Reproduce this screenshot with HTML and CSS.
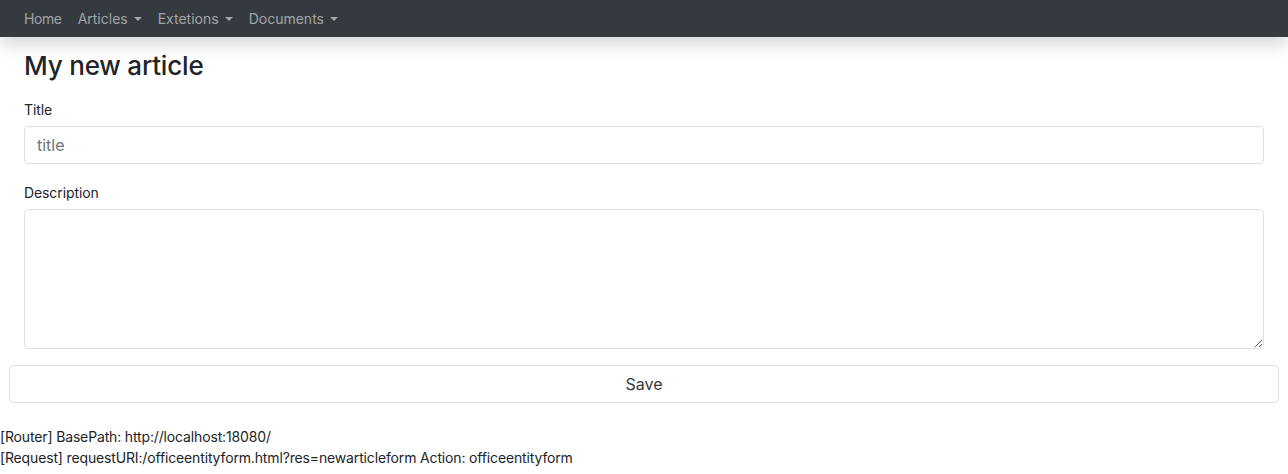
FILE: index.html
```html
<!DOCTYPE html>
<html lang="en">
<head>
<meta charset="utf-8">
<title>My new article</title>
<link rel="stylesheet" href="styles.css">
</head>
<body>
<nav class="navbar">
  <a class="nav-link" href="#">Home</a>
  <a class="nav-link dropdown" href="#">Articles</a>
  <a class="nav-link dropdown" href="#">Extetions</a>
  <a class="nav-link dropdown" href="#">Documents</a>
</nav>
<main class="content">
  <h3 class="page-title">My new article</h3>
  <div class="field">
    <label class="field-label" for="title">Title</label>
    <input class="field-input" id="title" type="text" placeholder="title">
  </div>
  <div class="field">
    <label class="field-label" for="desc">Description</label>
    <textarea class="field-area" id="desc"></textarea>
  </div>
</main>
<div class="actions">
  <button class="save-btn" type="button">Save</button>
</div>
<div class="debug">
  <div class="debug-line">[Router] BasePath: http://localhost:18080/</div>
  <div class="debug-line">[Request] requestURI:/officeentityform.html?res=newarticleform Action: officeentityform</div>
</div>
</body>
</html>
```
FILE: styles.css
```css
* { box-sizing: border-box; }
html, body { margin: 0; padding: 0; }
body {
  font-family: Inter, "Liberation Sans", Arial, sans-serif;
  font-size: 14px;
  line-height: 1.5;
  color: #212529;
  background: #fff;
}
.navbar {
  display: flex;
  align-items: center;
  gap: 16px;
  height: 37px;
  padding: 0 24px;
  background: #343a40;
  box-shadow: 0 8px 16px rgba(0, 0, 0, 0.15);
  position: relative;
  z-index: 1;
}
.nav-link {
  color: rgba(255, 255, 255, 0.55);
  text-decoration: none;
  font-size: 14px;
  line-height: 21px;
  display: inline-flex;
  align-items: center;
}
.nav-link:first-child { letter-spacing: -0.4px; }
.dropdown::after {
  content: "";
  display: inline-block;
  margin-left: 6px;
  border-top: 4px solid rgba(255, 255, 255, 0.55);
  border-left: 4px solid transparent;
  border-right: 4px solid transparent;
  margin-top: 1px;
}
.content {
  padding: 12px 24px 0;
}
.page-title {
  margin: 0 0 14px;
  font-size: 26px;
  font-weight: 500;
  line-height: 34px;
  letter-spacing: -0.2px;
}
.field { margin-bottom: 16px; }
.field:last-child { margin-bottom: 0; }
.field-label {
  display: block;
  padding-top: 2px;
  margin-bottom: 6px;
  font-size: 14px;
  line-height: 21px;
  letter-spacing: -0.1px;
}
.field-input, .field-area {
  display: block;
  width: 100%;
  font-family: inherit;
  font-size: 16px;
  line-height: 24px;
  color: #212529;
  border: 1px solid #dee2e6;
  border-radius: 4px;
  padding: 6px 12px;
  background: #fff;
}
.field-input { height: 38px; }
.field-input::placeholder { color: #6c757d; }
.field-area { height: 140px; resize: both; }
.actions {
  padding: 16px 9px 0;
}
.save-btn {
  display: block;
  width: 100%;
  height: 38px;
  font-family: inherit;
  font-size: 16px;
  color: #343a40;
  background: #fff;
  border: 1px solid #dee2e6;
  border-radius: 4px;
}
.debug {
  padding-top: 23px;
}
.debug-line {
  font-size: 14px;
  line-height: 21px;
  letter-spacing: -0.15px;
}
```
